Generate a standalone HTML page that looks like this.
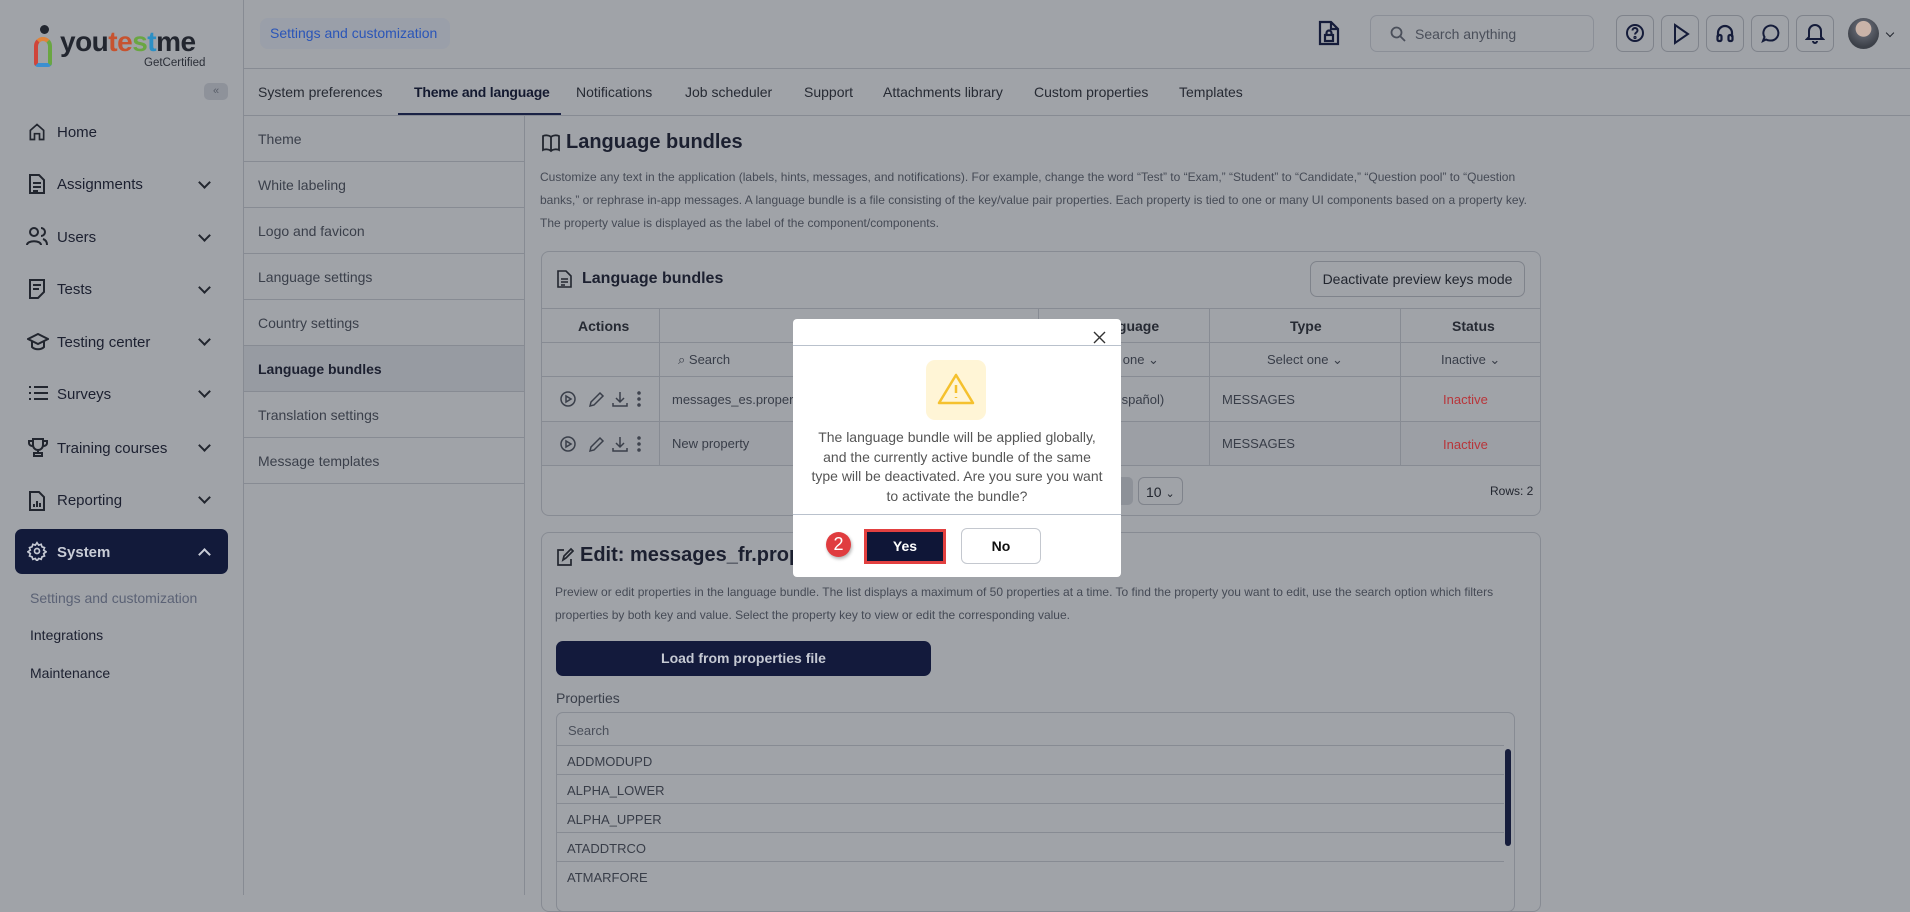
<!DOCTYPE html>
<html><head><meta charset="utf-8">
<style>
*{box-sizing:border-box;margin:0;padding:0}
body{width:1910px;height:895px;overflow:hidden;background:#a0a3a8;font-family:"Liberation Sans",sans-serif;color:#22262f;position:relative}
.a{position:absolute}
.ln{position:absolute;background:#878b93}
.sb{font-size:15px;color:#1c2030}
.chev{position:absolute;left:200px;width:9px;height:9px;border-right:2px solid #22262f;border-bottom:2px solid #22262f;transform:rotate(45deg)}
.tab{position:absolute;top:84px;font-size:14px;color:#262a33}
.sub{position:absolute;left:258px;font-size:14px;color:#3a3f4a}
.ib{position:absolute;top:15px;width:38px;height:37px;border:1px solid #7f838b;border-radius:7px}
.desc{font-size:12px;color:#454a55;line-height:23px}
.th{position:absolute;top:318px;font-size:14px;font-weight:bold;color:#262a33}
.cell{position:absolute;font-size:13px;color:#383d48}
.red{color:#b8353a}
.prow{position:absolute;left:557px;width:947px;height:29px;border-top:1px solid #878b93;font-size:13px;color:#383d48;padding:8px 10px}
</style></head><body>
<!-- sidebar -->
<div class="ln" style="left:243px;top:0;width:1px;height:895px"></div>
<div class="a" style="left:40px;top:25px;width:9px;height:9px;border-radius:50%;background:#22262f"></div>
<div class="a" style="left:34px;top:37px;width:18px;height:30px;border:4px solid #e0833a;border-radius:9px 9px 4px 4px;border-bottom-color:#3b8fd0;border-left-color:#d0453a;border-right-color:#6aa642"></div>
<div class="a" style="left:60px;top:26px;font-size:28px;font-weight:bold;letter-spacing:-0.5px;color:#22262f">you<span style="color:#c7532f">te</span><span style="color:#6aa642">s</span><span style="color:#2c8fc4">t</span>me</div>
<div class="a" style="left:144px;top:57px;font-size:11.5px;color:#2a2e37">GetCertified</div>
<div class="a" style="left:204px;top:83px;width:24px;height:17px;border-radius:5px;background:#8e929a;font-size:11px;color:#5a5f6a;text-align:center;line-height:17px">&laquo;</div>

<svg class="a" style="left:27px;top:122px" width="20" height="20" viewBox="0 0 24 24" fill="none" stroke="#22262f" stroke-width="2"><path d="M4 21V10l8-7 8 7v11h-5v-7H9v7z"/></svg>
<div class="a sb" style="left:57px;top:124px">Home</div>
<svg class="a" style="left:28px;top:173px" width="18" height="22" viewBox="0 0 18 22" fill="none" stroke="#22262f" stroke-width="2"><path d="M2 2h9l5 5v13H2z M5 10h8M5 14h8M5 18h5"/></svg>
<div class="a sb" style="left:57px;top:176px">Assignments</div><div class="chev" style="top:178px"></div>
<svg class="a" style="left:26px;top:226px" width="22" height="20" viewBox="0 0 22 20" fill="none" stroke="#22262f" stroke-width="2"><circle cx="8" cy="6" r="4"/><path d="M1 19c0-5 14-5 14 0M15 2a4 4 0 010 8M17 13c3 1 4 3 4 6"/></svg>
<div class="a sb" style="left:57px;top:229px">Users</div><div class="chev" style="top:231px"></div>
<svg class="a" style="left:28px;top:278px" width="18" height="22" viewBox="0 0 18 22" fill="none" stroke="#22262f" stroke-width="2"><path d="M2 2h14v12l-6 6H2z M5 7h8M5 11h6"/></svg>
<div class="a sb" style="left:57px;top:281px">Tests</div><div class="chev" style="top:283px"></div>
<svg class="a" style="left:27px;top:333px" width="22" height="18" viewBox="0 0 22 18" fill="none" stroke="#22262f" stroke-width="2"><path d="M1 6l10-5 10 5-10 5z M5 8v6c3 3 9 3 12 0V8"/></svg>
<div class="a sb" style="left:57px;top:334px">Testing center</div><div class="chev" style="top:335px"></div>
<svg class="a" style="left:28px;top:385px" width="20" height="16" viewBox="0 0 20 16" fill="none" stroke="#22262f" stroke-width="2"><path d="M6 2h14M6 8h14M6 14h14M1 2h2M1 8h2M1 14h2"/></svg>
<div class="a sb" style="left:57px;top:386px">Surveys</div><div class="chev" style="top:387px"></div>
<svg class="a" style="left:28px;top:437px" width="20" height="20" viewBox="0 0 20 20" fill="none" stroke="#22262f" stroke-width="2"><path d="M5 2h10v6a5 5 0 01-10 0zM5 4H1v2c0 2 2 3 4 3M15 4h4v2c0 2-2 3-4 3M10 13v3M6 19h8v-3H6z"/></svg>
<div class="a sb" style="left:57px;top:440px">Training courses</div><div class="chev" style="top:441px"></div>
<svg class="a" style="left:28px;top:490px" width="18" height="22" viewBox="0 0 18 22" fill="none" stroke="#22262f" stroke-width="2"><path d="M2 2h9l5 5v13H2z M6 17v-3M9 17v-6M12 17v-4"/></svg>
<div class="a sb" style="left:57px;top:492px">Reporting</div><div class="chev" style="top:493px"></div>
<div class="a" style="left:15px;top:529px;width:213px;height:45px;border-radius:7px;background:#121a3a"></div>
<svg class="a" style="left:27px;top:541px" width="20" height="20" viewBox="0 0 24 24" fill="none" stroke="#c5c9d3" stroke-width="2"><circle cx="12" cy="12" r="3"/><path d="M12 2l2 3 3-1 1 3 3 1-1 3 3 2-3 2 1 3-3 1-1 3-3-1-2 3-2-3-3 1-1-3-3-1 1-3-3-2 3-2-1-3 3-1 1-3 3 1z"/></svg>
<div class="a sb" style="left:57px;top:544px;color:#c8ccd6;font-weight:bold">System</div>
<div class="chev" style="top:550px;border-color:#c8ccd6;transform:rotate(-135deg)"></div>
<div class="a" style="left:30px;top:590px;font-size:14px;color:#5b6275">Settings and customization</div>
<div class="a" style="left:30px;top:627px;font-size:14px;color:#1c2030">Integrations</div>
<div class="a" style="left:30px;top:665px;font-size:14px;color:#1c2030">Maintenance</div>

<!-- topbar -->
<div class="ln" style="left:244px;top:68px;width:1666px;height:1px"></div>
<div class="a" style="left:260px;top:18px;width:190px;height:31px;border-radius:8px;background:#9a9fa9"></div>
<div class="a" style="left:270px;top:25px;font-size:14px;color:#2a55b8">Settings and customization</div>
<svg class="a" style="left:1318px;top:20px" width="22" height="26" viewBox="0 0 22 26" fill="none" stroke="#151c3a" stroke-width="2.2"><path d="M2 2h11l7 7v15H2z M13 2v7h7"/><rect x="7" y="15" width="8" height="6"/><path d="M8.5 15v-2a2.5 2.5 0 015 0v2"/></svg>
<div class="a" style="left:1370px;top:15px;width:224px;height:37px;border:1px solid #8b8f97;border-radius:7px"></div>
<svg class="a" style="left:1390px;top:26px" width="16" height="16" viewBox="0 0 16 16" fill="none" stroke="#4a4f5a" stroke-width="1.8"><circle cx="6.5" cy="6.5" r="5"/><path d="M10.5 10.5l4.5 4.5"/></svg>
<div class="a" style="left:1415px;top:26px;font-size:14px;color:#4a4f5a">Search anything</div>
<div class="ib" style="left:1616px"></div><div class="ib" style="left:1661px"></div><div class="ib" style="left:1706px"></div><div class="ib" style="left:1751px"></div><div class="ib" style="left:1796px"></div>
<svg class="a" style="left:1625px;top:23px" width="20" height="20" viewBox="0 0 20 20" fill="none" stroke="#151c3a" stroke-width="2"><circle cx="10" cy="10" r="8"/><path d="M7.5 7.5a2.5 2.5 0 115 0c0 2-2.5 2-2.5 4"/><circle cx="10" cy="14.5" r=".6"/></svg>
<svg class="a" style="left:1672px;top:23px" width="18" height="22" viewBox="0 0 18 22" fill="none" stroke="#151c3a" stroke-width="2"><path d="M3 2l13 9-13 9z"/></svg>
<svg class="a" style="left:1715px;top:23px" width="20" height="20" viewBox="0 0 20 20" fill="none" stroke="#151c3a" stroke-width="2.2"><path d="M3 14v-4a7 7 0 0114 0v4"/><rect x="2.5" y="12" width="4" height="6" rx="1.5"/><rect x="13.5" y="12" width="4" height="6" rx="1.5"/></svg>
<svg class="a" style="left:1760px;top:23px" width="20" height="20" viewBox="0 0 20 20" fill="none" stroke="#151c3a" stroke-width="2"><path d="M3 18l1.5-4A7.5 7.5 0 1110 17.5 8 8 0 016 16.5z"/></svg>
<svg class="a" style="left:1805px;top:22px" width="20" height="22" viewBox="0 0 20 22" fill="none" stroke="#151c3a" stroke-width="2"><path d="M4 15V9a6 6 0 0112 0v6l2 2H2z M8 19a2 2 0 004 0"/></svg>
<div class="a" style="left:1848px;top:18px;width:31px;height:31px;border-radius:50%;background:radial-gradient(circle at 50% 35%,#c9b3a8 0 30%,#5b5f69 32%,#3c4048 70%)"></div>
<div class="a" style="left:1887px;top:30px;width:6px;height:6px;border-right:1.5px solid #22262f;border-bottom:1.5px solid #22262f;transform:rotate(45deg)"></div>

<!-- tabs -->
<div class="ln" style="left:244px;top:115px;width:1666px;height:1px"></div>
<div class="tab" style="left:258px">System preferences</div>
<div class="tab" style="left:414px;font-weight:bold;color:#141a30;letter-spacing:-0.2px">Theme and language</div>
<div class="a" style="left:398px;top:113px;width:163px;height:2px;background:#1a2245"></div>
<div class="tab" style="left:576px">Notifications</div>
<div class="tab" style="left:685px">Job scheduler</div>
<div class="tab" style="left:804px">Support</div>
<div class="tab" style="left:883px">Attachments library</div>
<div class="tab" style="left:1034px">Custom properties</div>
<div class="tab" style="left:1179px">Templates</div>

<!-- sub menu -->
<div class="ln" style="left:524px;top:116px;width:1px;height:779px"></div>
<div class="sub" style="top:131px">Theme</div>
<div class="ln" style="left:244px;top:161px;width:280px;height:1px"></div>
<div class="sub" style="top:177px">White labeling</div>
<div class="ln" style="left:244px;top:207px;width:280px;height:1px"></div>
<div class="sub" style="top:223px">Logo and favicon</div>
<div class="ln" style="left:244px;top:253px;width:280px;height:1px"></div>
<div class="sub" style="top:269px">Language settings</div>
<div class="ln" style="left:244px;top:299px;width:280px;height:1px"></div>
<div class="sub" style="top:315px">Country settings</div>
<div class="ln" style="left:244px;top:345px;width:280px;height:1px"></div>
<div class="a" style="left:244px;top:346px;width:280px;height:45px;background:#979ba2"></div>
<div class="sub" style="top:361px;font-weight:bold;color:#1c2030">Language bundles</div>
<div class="ln" style="left:244px;top:391px;width:280px;height:1px"></div>
<div class="sub" style="top:407px">Translation settings</div>
<div class="ln" style="left:244px;top:437px;width:280px;height:1px"></div>
<div class="sub" style="top:453px">Message templates</div>
<div class="ln" style="left:244px;top:483px;width:280px;height:1px"></div>

<!-- content -->
<svg class="a" style="left:541px;top:133px" width="20" height="20" viewBox="0 0 20 20" fill="none" stroke="#22262f" stroke-width="1.8"><path d="M10 4c-2-2-6-2-8-1v14c2-1 6-1 8 1 2-2 6-2 8-1V3c-2-1-6-1-8 1zM10 4v14"/></svg>
<div class="a" style="left:566px;top:131px;font-size:20px;font-weight:bold;color:#1c2030">Language bundles</div>
<div class="a desc" style="left:540px;top:166px;width:1020px">Customize any text in the application (labels, hints, messages, and notifications). For example, change the word “Test” to “Exam,” “Student” to “Candidate,” “Question pool” to “Question<br>banks,” or rephrase in-app messages. A language bundle is a file consisting of the key/value pair properties. Each property is tied to one or many UI components based on a property key.<br>The property value is displayed as the label of the component/components.</div>

<!-- card 1 -->
<div class="a" style="left:541px;top:251px;width:1000px;height:265px;border:1px solid #878b93;border-radius:8px"></div>
<svg class="a" style="left:557px;top:270px" width="15" height="18" viewBox="0 0 15 18" fill="none" stroke="#22262f" stroke-width="1.6"><path d="M1 1h8l5 5v11H1z M4 9h7M4 12h7M4 15h4"/></svg>
<div class="a" style="left:582px;top:270px;font-size:16px;font-weight:bold;color:#1c2030">Language bundles</div>
<div class="a" style="left:1310px;top:261px;width:215px;height:36px;border:1px solid #7f838b;border-radius:7px;font-size:14px;color:#22262f;text-align:center;line-height:34px">Deactivate preview keys mode</div>
<div class="ln" style="left:541px;top:308px;width:1000px;height:1px"></div>
<div class="ln" style="left:541px;top:342px;width:1000px;height:1px"></div>
<div class="ln" style="left:541px;top:376px;width:1000px;height:1px"></div>
<div class="ln" style="left:541px;top:421px;width:1000px;height:1px"></div>
<div class="a" style="left:542px;top:422px;width:998px;height:43px;background:#9c9fa5"></div>
<div class="ln" style="left:541px;top:465px;width:1000px;height:1px"></div>
<div class="ln" style="left:659px;top:308px;width:1px;height:157px"></div>
<div class="ln" style="left:1038px;top:308px;width:1px;height:157px"></div>
<div class="ln" style="left:1209px;top:308px;width:1px;height:157px"></div>
<div class="ln" style="left:1400px;top:308px;width:1px;height:157px"></div>
<div class="th" style="left:578px">Actions</div>
<div class="th" style="left:1093px">Language</div>
<div class="th" style="left:1290px">Type</div>
<div class="th" style="left:1452px">Status</div>
<div class="cell" style="left:678px;top:352px">⌕ Search</div>
<div class="cell" style="left:1083px;top:352px">Select one ⌄</div>
<div class="cell" style="left:1267px;top:352px">Select one ⌄</div>
<div class="cell" style="left:1441px;top:352px">Inactive ⌄</div>
<div class="cell" style="left:672px;top:392px">messages_es.properties</div>
<div class="cell" style="left:1058px;top:392px">Spanish (Español)</div>
<div class="cell" style="left:1222px;top:392px">MESSAGES</div>
<div class="cell red" style="left:1443px;top:392px">Inactive</div>
<div class="cell" style="left:672px;top:436px">New property</div>
<div class="cell" style="left:1222px;top:436px">MESSAGES</div>
<div class="cell red" style="left:1443px;top:437px">Inactive</div>
<svg class="a" style="left:558px;top:388px" width="90" height="22" viewBox="0 0 90 22" fill="none" stroke="#3a3f4a" stroke-width="1.5"><circle cx="10" cy="11" r="7"/><path d="M8 8v6l5-3z"/><path d="M32 18l1-4 9-9 3 3-9 9z"/><path d="M62 4v10M58 10l4 4 4-4M55 15v3h14v-3"/><circle cx="81" cy="5" r="1"/><circle cx="81" cy="11" r="1"/><circle cx="81" cy="17" r="1"/></svg>
<svg class="a" style="left:558px;top:433px" width="90" height="22" viewBox="0 0 90 22" fill="none" stroke="#3a3f4a" stroke-width="1.5"><circle cx="10" cy="11" r="7"/><path d="M8 8v6l5-3z"/><path d="M32 18l1-4 9-9 3 3-9 9z"/><path d="M62 4v10M58 10l4 4 4-4M55 15v3h14v-3"/><circle cx="81" cy="5" r="1"/><circle cx="81" cy="11" r="1"/><circle cx="81" cy="17" r="1"/></svg>
<div class="a" style="left:1115px;top:477px;width:18px;height:28px;border-radius:5px;background:#8d9198"></div>
<div class="a" style="left:1138px;top:477px;width:45px;height:28px;border:1px solid #7f838b;border-radius:6px;font-size:14px;padding:6px 7px;white-space:nowrap">10 <span style="font-size:11px">&#8964;</span></div>
<div class="a" style="left:1490px;top:484px;font-size:12px;color:#22262f">Rows: 2</div>

<!-- card 2 -->
<div class="a" style="left:541px;top:532px;width:1000px;height:380px;border:1px solid #878b93;border-radius:8px"></div>
<svg class="a" style="left:556px;top:547px" width="18" height="20" viewBox="0 0 18 20" fill="none" stroke="#22262f" stroke-width="1.7"><path d="M8 3H2v15h13v-6M7 13l1-4 7-7 2 2-7 7z"/></svg>
<div class="a" style="left:580px;top:544px;font-size:20px;font-weight:bold;color:#1c2030">Edit: messages_fr.properties</div>
<div class="a desc" style="left:555px;top:581px;width:980px">Preview or edit properties in the language bundle. The list displays a maximum of 50 properties at a time. To find the property you want to edit, use the search option which filters<br>properties by both key and value. Select the property key to view or edit the corresponding value.</div>
<div class="a" style="left:556px;top:641px;width:375px;height:35px;border-radius:7px;background:#131a3c;color:#c5c9d3;font-size:14px;font-weight:bold;text-align:center;line-height:35px">Load from properties file</div>
<div class="a" style="left:556px;top:690px;font-size:14px;color:#3a3f4a">Properties</div>
<div class="a" style="left:556px;top:712px;width:959px;height:200px;border:1px solid #878b93;border-radius:7px"></div>
<div class="a" style="left:568px;top:723px;font-size:13px;color:#4a4f5a">Search</div>
<div class="prow" style="top:745px">ADDMODUPD</div>
<div class="prow" style="top:774px">ALPHA_LOWER</div>
<div class="prow" style="top:803px">ALPHA_UPPER</div>
<div class="prow" style="top:832px">ATADDTRCO</div>
<div class="prow" style="top:861px">ATMARFORE</div>
<div class="a" style="left:1505px;top:749px;width:6px;height:97px;border-radius:3px;background:#161d3c"></div>

<!-- modal -->
<div class="a" style="left:793px;top:319px;width:328px;height:258px;background:#fff;border-radius:4px"></div>
<div class="a" style="left:793px;top:345px;width:328px;height:1px;background:#b9c1cc"></div>
<div class="a" style="left:793px;top:514px;width:328px;height:1px;background:#b9c1cc"></div>
<svg class="a" style="left:1093px;top:331px" width="13" height="13" viewBox="0 0 13 13" stroke="#333" stroke-width="1.4"><path d="M1 1l11 11M12 1L1 12"/></svg>
<div class="a" style="left:926px;top:360px;width:60px;height:60px;border-radius:9px;background:#fff5d6"></div>
<svg class="a" style="left:937px;top:372px" width="38" height="34" viewBox="0 0 38 34" fill="none" stroke="#f5c12e" stroke-width="2.5" stroke-linejoin="round"><path d="M19 3L2 31h34z"/><path d="M19 13v8M19 25v1"/></svg>
<div class="a" style="left:793px;top:428px;width:328px;text-align:center;font-size:14px;line-height:19.5px;color:#555">The language bundle will be applied globally,<br>and the currently active bundle of the same<br>type will be deactivated. Are you sure you want<br>to activate the bundle?</div>
<div class="a" style="left:826px;top:532px;width:25px;height:25px;border-radius:50%;background:#e03c3f;color:#fff;font-size:18px;text-align:center;line-height:25px;box-shadow:1px 2px 3px rgba(0,0,0,.3)">2</div>
<div class="a" style="left:864px;top:529px;width:82px;height:35px;border:3px solid #e24040;background:#0f1637;color:#fff;font-size:14px;font-weight:bold;text-align:center;line-height:29px">Yes</div>
<div class="a" style="left:961px;top:528px;width:80px;height:36px;border:1px solid #c4c8cf;border-radius:6px;color:#111;font-size:14px;font-weight:bold;text-align:center;line-height:34px">No</div>
</body></html>
